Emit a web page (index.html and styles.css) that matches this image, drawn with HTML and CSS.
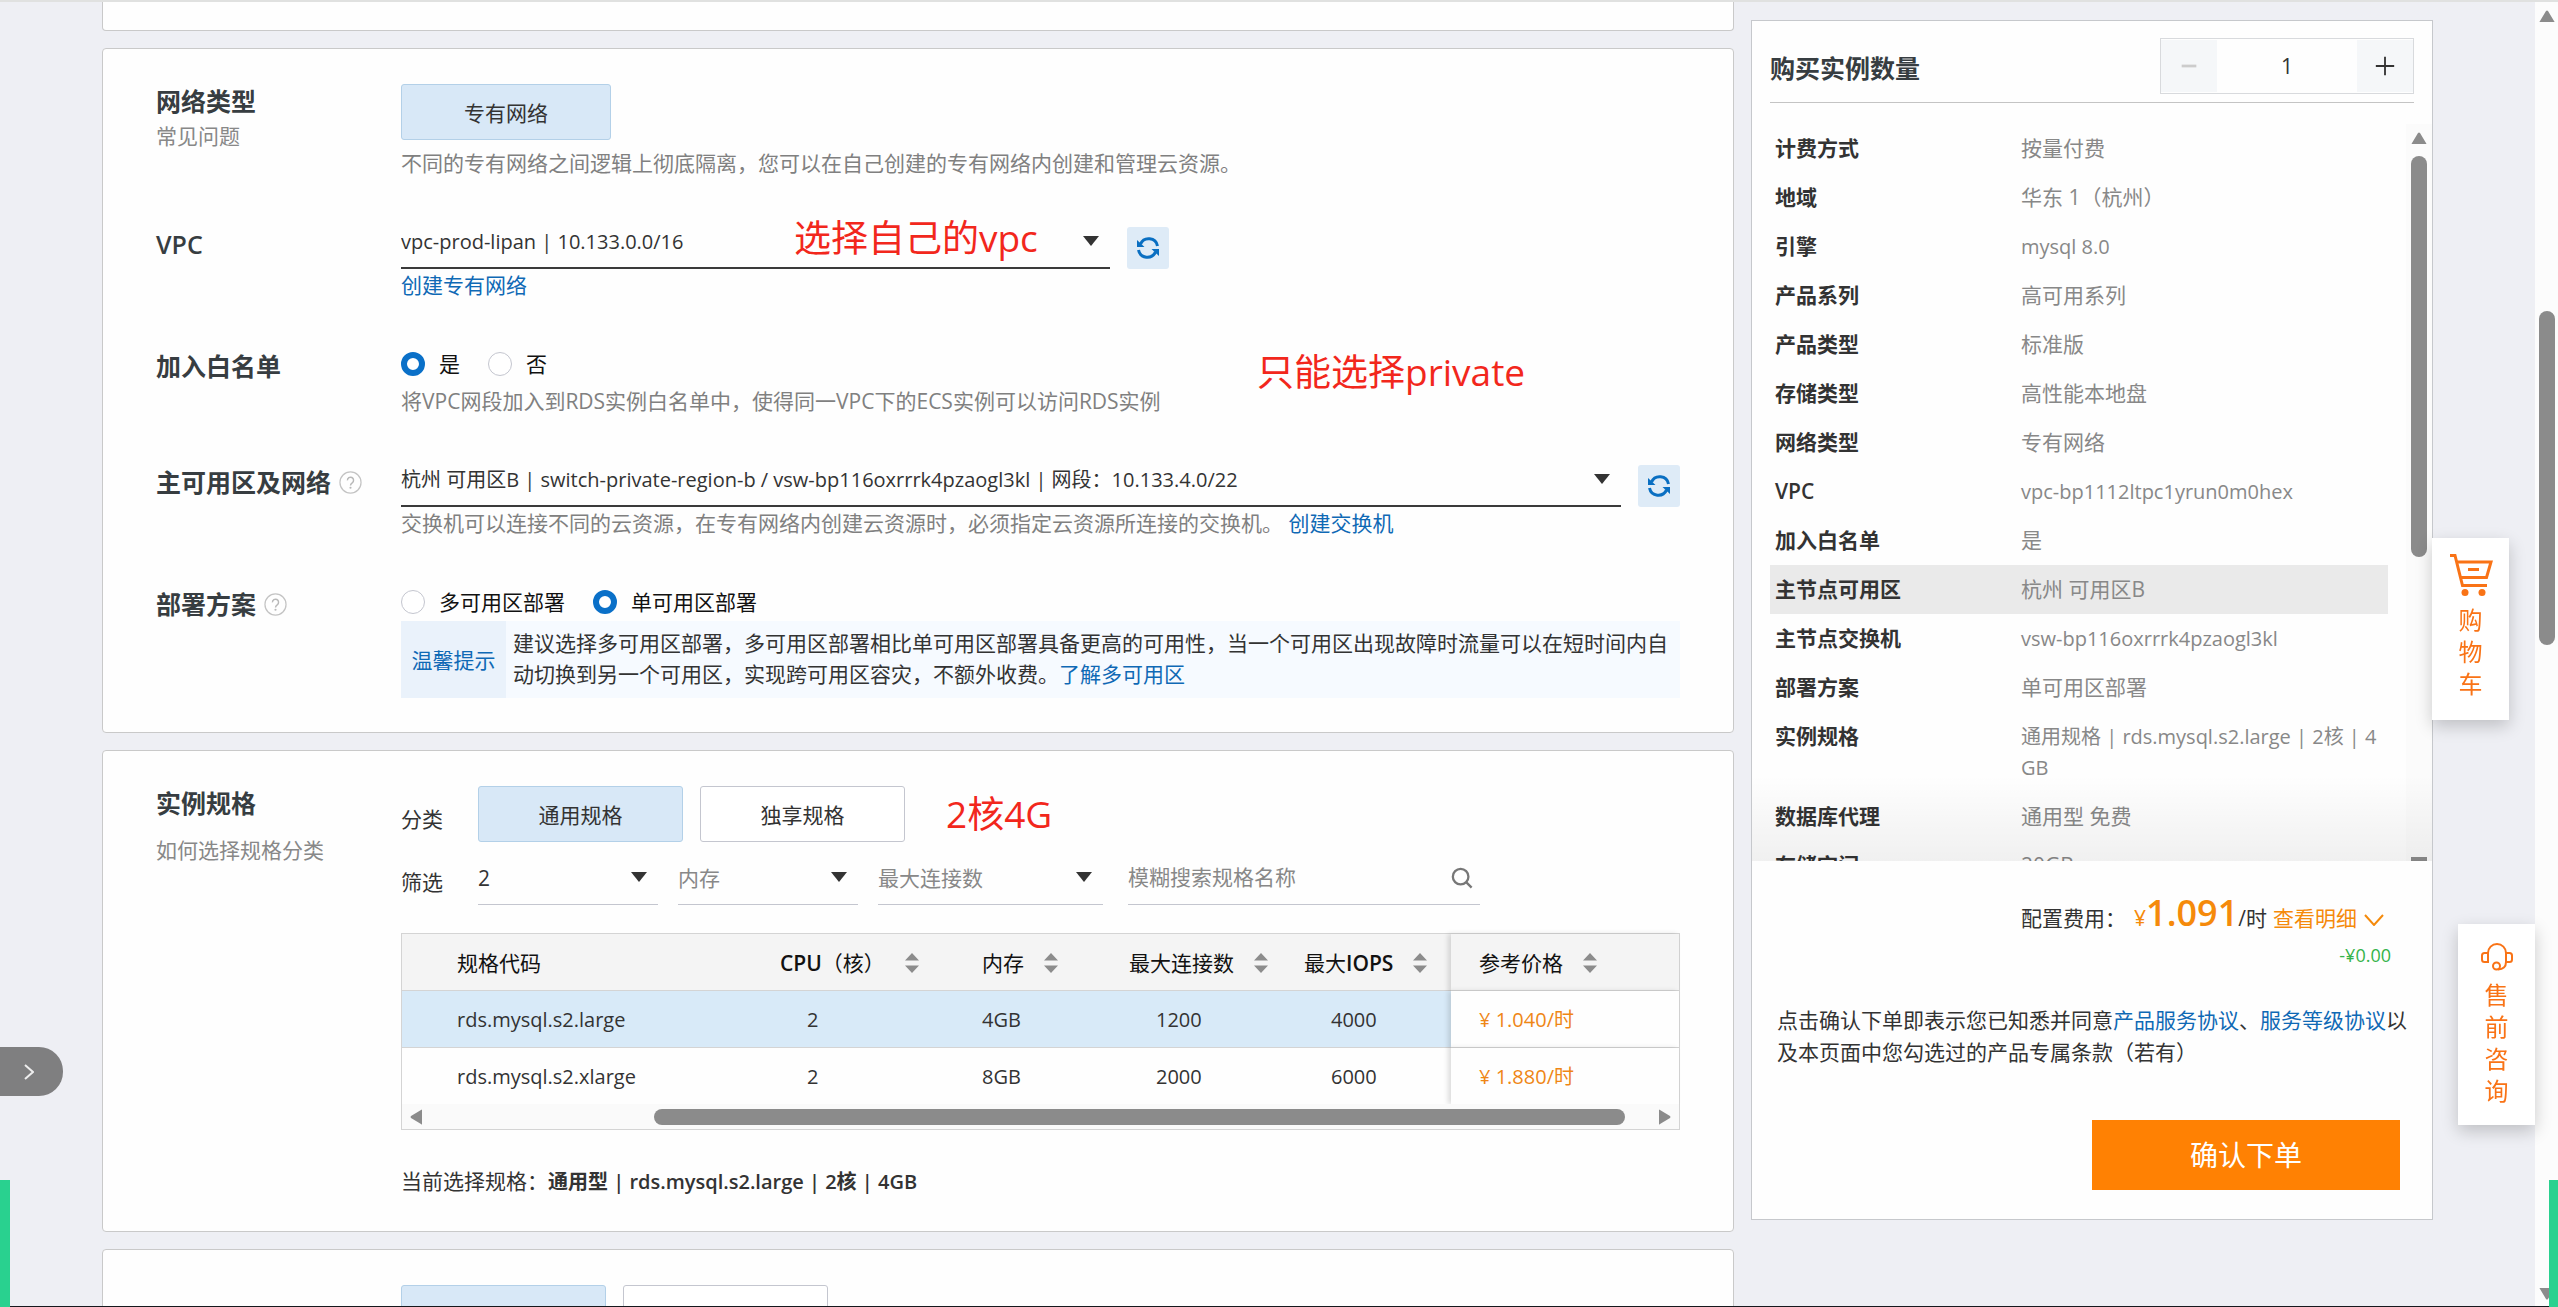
FILE: index.html
```html
<!DOCTYPE html>
<html lang="zh-CN">
<head>
<meta charset="utf-8">
<title>购买 RDS 实例</title>
<link rel="stylesheet" href="styles.css">
</head>
<body>
<svg class="defs" aria-hidden="true">
  <symbol id="i-caret" viewBox="0 0 16 10"><path d="M0 0h16L8 10z" fill="#333"/></symbol>
  <symbol id="i-refresh" viewBox="0 0 24 24"><g fill="none" stroke="#0a6fc2" stroke-width="3"><path d="M4.500 8A9 9 0 0 1 21.500 10"/><path d="M19.500 16A9 9 0 0 1 2.500 14"/></g><path d="M1 4v7h7.500zM23 20v-7h-7.500z" fill="#0a6fc2"/></symbol>
  <symbol id="i-help" viewBox="0 0 24 24"><circle cx="12" cy="12" r="11" fill="none" stroke="#c4c4c4" stroke-width="1.300"/><path d="M8.800 9.800a3.200 3.200 0 1 1 5 2.500c-1.200.800-1.800 1.300-1.800 2.700" fill="none" stroke="#b8b8b8" stroke-width="1.500"/><circle cx="12" cy="17.500" r="1.100" fill="#b8b8b8"/></symbol>
  <symbol id="i-sort" viewBox="0 0 14 20"><path d="M7 0l7 7.500H0zM7 20l7-7.500H0z" fill="#8c8c8c"/></symbol>
  <symbol id="i-search" viewBox="0 0 24 24"><g fill="none" stroke="#777" stroke-width="2.500"><circle cx="10.500" cy="10.500" r="8.500"/><path d="M16.500 16.500l6 6"/></g></symbol>
</svg>

<div class="page">
  <main class="form">
    <section class="card card-prev"></section>

    <section class="card">
      <div class="row">
        <div class="side-label"><h2>网络类型</h2><a class="sub" href="#">常见问题</a></div>
        <div class="field">
          <button class="choice choice-on choice-wide" type="button">专有网络</button>
          <p class="hint hint-after-button">不同的专有网络之间逻辑上彻底隔离，您可以在自己创建的专有网络内创建和管理云资源。</p>
        </div>
      </div>

      <div class="row">
        <div class="side-label"><h2><label for="vpc">VPC</label></h2></div>
        <div class="field">
          <div class="picker">
            <div class="select select-vpc">
              <select id="vpc"><option>vpc-prod-lipan | 10.133.0.0/16</option></select>
              <svg><use href="#i-caret"/></svg>
            </div>
            <button class="refresh" type="button" aria-label="刷新"><svg><use href="#i-refresh"/></svg></button>
          </div>
          <p class="hint"><a href="#">创建专有网络</a></p>
          <span class="note note-vpc">选择自己的vpc</span>
        </div>
      </div>

      <div class="row">
        <div class="side-label"><h2>加入白名单</h2></div>
        <div class="field">
          <div class="radios">
            <label><input type="radio" name="white" checked>是</label>
            <label><input type="radio" name="white">否</label>
          </div>
          <p class="hint hint-after-radio">将VPC网段加入到RDS实例白名单中，使得同一VPC下的ECS实例可以访问RDS实例</p>
          <span class="note note-private">只能选择private</span>
        </div>
      </div>

      <div class="row">
        <div class="side-label"><h2><label for="zone">主可用区及网络</label><svg><use href="#i-help"/></svg></h2></div>
        <div class="field">
          <div class="picker">
            <div class="select select-fill">
              <select id="zone"><option>杭州 可用区B | switch-private-region-b / vsw-bp116oxrrrk4pzaogl3kl | 网段：10.133.4.0/22</option></select>
              <svg><use href="#i-caret"/></svg>
            </div>
            <button class="refresh" type="button" aria-label="刷新"><svg><use href="#i-refresh"/></svg></button>
          </div>
          <p class="hint">交换机可以连接不同的云资源，在专有网络内创建云资源时，必须指定云资源所连接的交换机。 <a href="#">创建交换机</a></p>
        </div>
      </div>

      <div class="row">
        <div class="side-label"><h2>部署方案<svg><use href="#i-help"/></svg></h2></div>
        <div class="field">
          <div class="radios">
            <label><input type="radio" name="deploy">多可用区部署</label>
            <label><input type="radio" name="deploy" checked>单可用区部署</label>
          </div>
          <div class="tip">
            <div class="tip-name">温馨提示</div>
            <p>建议选择多可用区部署，多可用区部署相比单可用区部署具备更高的可用性，当一个可用区出现故障时流量可以在短时间内自动切换到另一个可用区，实现跨可用区容灾，不额外收费。<a href="#">了解多可用区</a></p>
          </div>
        </div>
      </div>
    </section>

    <section class="card">
      <div class="row">
        <div class="side-label side-label-loose"><h2>实例规格</h2><a class="sub" href="#">如何选择规格分类</a></div>
        <div class="field">
          <div class="line">
            <span class="line-name line-name-low">分类</span>
            <button class="choice choice-on" type="button">通用规格</button>
            <button class="choice" type="button">独享规格</button>
            <span class="note-inline">2核4G</span>
          </div>
          <div class="line filters">
            <span class="line-name">筛选</span>
            <div class="select select-light"><select aria-label="CPU"><option>2</option></select><svg><use href="#i-caret"/></svg></div>
            <div class="select select-light select-empty"><select aria-label="内存"><option>内存</option></select><svg><use href="#i-caret"/></svg></div>
            <div class="select select-light select-empty select-conn"><select aria-label="最大连接数"><option>最大连接数</option></select><svg><use href="#i-caret"/></svg></div>
            <div class="search"><input type="text" aria-label="规格名称" placeholder="模糊搜索规格名称"><svg><use href="#i-search"/></svg></div>
          </div>

          <div class="table-box">
            <table>
              <colgroup><col class="c-code"><col class="c-cpu"><col class="c-mem"><col class="c-num"><col class="c-num"><col></colgroup>
              <thead>
                <tr>
                  <th class="code">规格代码</th>
                  <th><b>CPU</b>（核）<svg><use href="#i-sort"/></svg></th>
                  <th>内存<svg><use href="#i-sort"/></svg></th>
                  <th>最大连接数<svg><use href="#i-sort"/></svg></th>
                  <th>最大<b>IOPS</b><svg><use href="#i-sort"/></svg></th>
                  <th class="price">参考价格<svg><use href="#i-sort"/></svg></th>
                </tr>
              </thead>
              <tbody>
                <tr class="on"><td class="code">rds.mysql.s2.large</td><td class="num">2</td><td>4GB</td><td class="num">1200</td><td class="num">4000</td><td class="price">¥ 1.040/时</td></tr>
                <tr><td class="code">rds.mysql.s2.xlarge</td><td class="num">2</td><td>8GB</td><td class="num">2000</td><td class="num">6000</td><td class="price">¥ 1.880/时</td></tr>
              </tbody>
            </table>
            <div class="hbar" aria-hidden="true">
              <svg viewBox="0 0 12 16"><path d="M12 1v14q0 1-1 0L1 9q-1-1 0-2l10-6q1-1 1 0z"/></svg>
              <span class="hbar-thumb"></span>
              <svg viewBox="0 0 12 16"><path d="M0 1v14q0 1 1 0l10-6q1-1 0-2L1 1q-1-1-1 0z"/></svg>
            </div>
          </div>

          <p class="picked">当前选择规格：<strong>通用型 | rds.mysql.s2.large | 2核 | 4GB</strong></p>
        </div>
      </div>
    </section>

    <section class="card">
      <div class="row">
        <div class="side-label"></div>
        <div class="field line">
          <button class="choice choice-on" type="button" aria-label="选项一"></button>
          <button class="choice" type="button" aria-label="选项二"></button>
        </div>
      </div>
    </section>
  </main>

  <aside class="order">
    <header class="order-head">
      <h2><label for="qty">购买实例数量</label></h2>
      <div class="stepper">
        <button type="button" aria-label="减少"><svg viewBox="0 0 24 24"><path d="M4 12h16" stroke="#ccc" stroke-width="3"/></svg></button>
        <input id="qty" type="text" value="1">
        <button type="button" aria-label="增加"><svg viewBox="0 0 24 24"><path d="M2 12h20M12 2v20" stroke="#333" stroke-width="2"/></svg></button>
      </div>
    </header>

    <div class="summary">
      <dl>
        <div><dt>计费方式</dt><dd>按量付费</dd></div>
        <div><dt>地域</dt><dd>华东 1（杭州）</dd></div>
        <div><dt>引擎</dt><dd class="code-text">mysql 8.0</dd></div>
        <div><dt>产品系列</dt><dd>高可用系列</dd></div>
        <div><dt>产品类型</dt><dd>标准版</dd></div>
        <div><dt>存储类型</dt><dd>高性能本地盘</dd></div>
        <div><dt>网络类型</dt><dd>专有网络</dd></div>
        <div><dt>VPC</dt><dd class="code-text">vpc-bp1112ltpc1yrun0m0hex</dd></div>
        <div><dt>加入白名单</dt><dd>是</dd></div>
        <div class="hover"><dt>主节点可用区</dt><dd>杭州 可用区B</dd></div>
        <div><dt>主节点交换机</dt><dd class="code-text">vsw-bp116oxrrrk4pzaogl3kl</dd></div>
        <div><dt>部署方案</dt><dd>单可用区部署</dd></div>
        <div><dt>实例规格</dt><dd class="code-text">通用规格 | rds.mysql.s2.large | 2核 | 4<wbr>GB</dd></div>
        <div><dt>数据库代理</dt><dd>通用型 免费</dd></div>
        <div><dt>存储空间</dt><dd>20GB</dd></div>
      </dl>
      <div class="vbar" aria-hidden="true">
        <svg viewBox="0 0 16 12"><path d="M1 12h14q1 0 0-1L9 1q-1-1-2 0L1 11q-1 1 0 1z"/></svg>
        <span class="vbar-thumb"></span>
        <span class="vbar-end"></span>
      </div>
    </div>

    <div class="fee">
      <span>配置费用：</span>
      <span class="fee-sum"><span class="orange">¥</span><strong>1.091</strong>/时</span>
      <a class="orange" href="#">查看明细<svg viewBox="0 0 20 12"><path d="M1 1l9 10L19 1" fill="none" stroke="#f58a0b" stroke-width="2"/></svg></a>
    </div>
    <p class="discount">-¥0.00</p>
    <p class="terms">点击确认下单即表示您已知悉并同意<a href="#">产品服务协议</a>、<a href="#">服务等级协议</a>以及本页面中您勾选过的产品专属条款（若有）</p>
    <button class="submit" type="button">确认下单</button>
  </aside>
</div>

<div class="page-bar" aria-hidden="true">
  <svg viewBox="0 0 16 12"><path d="M1 12h14q1 0 0-1L9 1q-1-1-2 0L1 11q-1 1 0 1z"/></svg>
  <span class="page-thumb"></span>
  <svg viewBox="0 0 16 12"><path d="M1 0h14q1 0 0 1L9 11q-1 1-2 0L1 1q-1-1 0-1z"/></svg>
</div>

<button class="drawer" type="button" aria-label="展开"><svg viewBox="0 0 10 16"><path d="M1 1l8 7-8 7" fill="none" stroke="#eee" stroke-width="2"/></svg></button>

<a class="float cart" href="#">
  <svg viewBox="0 0 44 44"><g fill="none" stroke="#f97316" stroke-width="3"><path d="M1 2.500h5L13.500 32.500H38"/><path d="M8 9h34l-4.500 15.500H12"/><path d="M19 16.500h11"/></g><circle cx="16" cy="39.500" r="3.500" fill="#f97316"/><circle cx="33" cy="39.500" r="3.500" fill="#f97316"/></svg>
  <span>购物车</span>
</a>
<a class="float consult" href="#">
  <svg viewBox="0 0 32 28"><g fill="none" stroke="#f97316" stroke-width="2"><path d="M7 19V10a9 9 0 0 1 18 0v9q0 7-8 7.500"/><path d="M7 10H3.500Q1 10 1 12.500v4Q1 19 3.500 19H7zM25 10h3.500q2.500 0 2.500 2.500v4q0 2.500-2.500 2.500H25z"/><circle cx="15.500" cy="23" r="3.500"/></g></svg>
  <span>售前咨询</span>
</a>
<span class="edge edge-left"></span>
<span class="edge edge-right"></span>
</body>
</html>
```
FILE: styles.css
```css
* { box-sizing: border-box; }

body {
  display: flex;
  height: 100vh;
  margin: 0;
  overflow: hidden;
  border-top: 2px solid #e0e1e0;
  border-bottom: 1px solid #15181d;
  background: #eeeff4;
  color: #333;
  font: 21px/30px "Open Sans", "Noto Sans CJK SC", sans-serif;
}

h2, p, dl, dd { margin: 0; }
a { color: #0f69b5; text-decoration: none; }
button, input, select { margin: 0; border: 0; border-radius: 0; padding: 0; background: none; color: inherit; font: inherit; }
svg { display: block; flex: none; }
.defs { position: absolute; width: 0; height: 0; }

.page {
  display: flex;
  flex: 1;
  align-items: flex-start;
  gap: 17px;
  min-width: 0;
  padding: 0 102px;
  overflow: hidden;
}

/* form column */
.form { display: flex; flex: 1; flex-direction: column; gap: 17px; min-width: 0; }
.card {
  display: flex;
  flex-direction: column;
  gap: 49px;
  padding: 35px 53px 34px 53px;
  border: 1px solid #c9c9c9;
  border-radius: 4px;
  background: #fefefe;
}
.card-prev { height: 29px; padding: 0; border-top: 0; border-radius: 0 0 4px 4px; }
.row { display: grid; grid-template-columns: 245px minmax(0, 1fr); }
.field { position: relative; }

.side-label { display: flex; flex-direction: column; gap: 3px; }
.side-label-loose { gap: 15px; }
.side-label h2 { display: flex; align-items: center; gap: 8px; font-size: 25px; line-height: 34px; font-weight: 600; color: #373d41; }
.side-label h2 svg { width: 23px; height: 23px; }
.sub { color: #888; }
.hint { margin-top: 1px; color: #808080; }
.hint-after-button { margin-top: 8px; }
.hint-after-radio { margin-top: 7px; }

.choice {
  width: 205px;
  height: 56px;
  padding-top: 2px;
  border: 1px solid #c4c6cf;
  border-radius: 3px;
  background: #fff;
}
.choice-on { border-color: #b3d0e8; background: #d8e8f7; }
.choice-wide { width: 210px; }

.picker { display: flex; gap: 17px; }
.select { display: grid; align-items: start; height: 42px; border-bottom: 2px solid #3a3a3a; }
.select > * { grid-area: 1 / 1; }
.select select { width: 100%; height: 28px; appearance: none; outline: 0; font-size: 20px; }
.select svg { width: 16px; height: 10px; margin: 9px 11px 0 0; justify-self: end; pointer-events: none; }
.select-vpc { width: 709px; }
.select-fill { flex: 1; }
.refresh { display: grid; place-items: center; width: 42px; height: 42px; border-radius: 3px; background: #deebf7; }
.refresh svg { width: 24px; height: 24px; }

.radios { display: flex; gap: 28px; color: #111; }
.radios label { display: flex; align-items: center; gap: 14px; }
.radios input { width: 24px; height: 24px; appearance: none; border: 1px solid #c4c6cf; border-radius: 50%; background: #fff; }
.radios input:checked { border: 6px solid #0a70c8; }

.tip { display: flex; margin-top: 4px; background: #f6faff; }
.tip-name { display: grid; flex: none; place-items: center; width: 105px; background: #eaf2fb; color: #0f69b5; }
.tip p { padding: 7px 0 8px 7px; line-height: 31px; }

/* red remarks written over the form */
.note, .note-inline { color: #f2271c; font-size: 37px; line-height: 50px; white-space: nowrap; }
.note { position: absolute; pointer-events: none; }
.note-vpc { top: -14px; left: 393px; }
.note-private { top: -2px; left: 856px; }
.note-inline { margin-left: 24px; }

.line { display: flex; align-items: center; gap: 17px; }
.line-name { width: 60px; }
.line-name-low { padding-top: 10px; }
.filters { gap: 20px; margin-top: 21px; }
.filters .line-name { width: 57px; padding-bottom: 4px; }
.filters select { font-size: 21px; }
.select-light { width: 180px; border-bottom: 1px solid #c4c6cf; }
.select-empty { color: #888; }
.select-conn { width: 225px; }
.search { display: flex; width: 352px; height: 42px; margin-left: 5px; border-bottom: 1px solid #c4c6cf; }
.search input { flex: 1; min-width: 0; height: 28px; outline: 0; }
.search input::placeholder { color: #888; opacity: 1; }
.search svg { width: 22px; height: 22px; margin: 4px 7px 0 0; }

.table-box { margin-top: 28px; border: 1px solid #d4d4d4; }
table { width: 100%; border-collapse: separate; border-spacing: 0; table-layout: fixed; }
.c-code { width: 350px; }
.c-cpu { width: 202px; }
.c-mem { width: 147px; }
.c-num { width: 175px; }
th, td { height: 57px; padding: 1px 0 0 28px; border-bottom: 1px solid #d4d4d4; text-align: left; white-space: nowrap; }
td { font-size: 20px; }
tbody tr:last-child td { height: 56px; border-bottom: 0; }
th { background: #f4f4f4; color: #111; font-weight: 400; }
th b { font-weight: 600; }
th svg { display: inline-block; width: 14px; height: 20px; margin-left: 20px; vertical-align: -2px; }
.code { padding-left: 55px; }
.num { padding-left: 55px; }
.on td { background: #d8eaf8; }
.price { box-shadow: -3px 0 5px #0002; }
td.price, .on td.price { background: #fefefe; color: #ef8615; }
.hbar { display: flex; align-items: center; justify-content: space-between; height: 25px; padding: 0 8px; background: #fafafa; fill: #8b8b8b; }
.hbar svg { width: 12px; height: 16px; }
.hbar-thumb { width: 77%; height: 16px; margin: 0 34px 0 auto; border-radius: 8px; background: #8b8b8b; }
.picked { margin-top: 36px; }
.picked strong { font-size: 20px; font-weight: 600; }

/* order panel */
.order { display: flex; flex: none; flex-direction: column; width: 682px; margin-top: 18px; padding: 17px 0 29px 18px; border: 1px solid #c6c8cc; background: #fefefe; }
.order-head { display: flex; align-items: center; justify-content: space-between; margin-right: 18px; padding-bottom: 8px; border-bottom: 1px solid #c4c4c4; }
.order-head h2 { font-size: 25px; line-height: 36px; font-weight: 600; color: #373d41; padding-top: 4px; }
.stepper { display: flex; width: 254px; height: 56px; border: 1px solid #d8dadd; padding: 1px 0; }
.stepper button { display: grid; place-items: center; width: 56px; background: #f5f7f9; }
.stepper svg { width: 22px; height: 22px; }
.stepper input { flex: 1; min-width: 0; text-align: center; }

.summary { position: relative; display: flex; height: calc(100vh - 570px); margin: 21px 0 0 -18px; padding-left: 18px; overflow: hidden; }
.summary::after { content: ""; position: absolute; inset: auto 0 0 0; height: 86px; background: linear-gradient(#0000, #0000000e); pointer-events: none; }
.summary dl { flex: 1; }
.summary dl div { display: grid; grid-template-columns: 246px minmax(0, 1fr); padding: 9px 0 9px 5px; line-height: 31px; }
.summary .hover { background: #eaeaea; }
.summary dt { font-weight: 600; }
.summary dd { color: #888; }
.code-text { font-size: 20px; }
.vbar { display: flex; flex: none; flex-direction: column; align-items: center; width: 26px; margin-left: 18px; padding-top: 8px; background: #fbfbfb; fill: #8b8b8b; }
.vbar svg { width: 16px; height: 12px; }
.vbar-thumb { width: 16px; height: 55%; margin: 12px 0 auto; border-radius: 8px; background: #8b8b8b; }
.vbar-end { width: 16px; height: 4px; background: #8b8b8b; }

.fee { display: flex; align-items: baseline; justify-content: flex-end; gap: 6px; margin-top: 30px; padding-right: 48px; line-height: 44px; }
.fee-sum { margin-left: 2px; }
.fee strong { color: #f58a0b; font-size: 36px; font-weight: 600; }
.orange { color: #f58a0b; }
.fee svg { display: inline-block; width: 20px; height: 12px; margin-left: 7px; }
.discount { padding-right: 41px; color: #35b34a; font-size: 18px; text-align: right; }
.terms { margin-top: 34px; padding: 0 18px 0 7px; line-height: 32px; }
.submit { align-self: flex-end; width: 308px; height: 70px; margin: 52px 32px 0 0; background: #ff8103; color: #fff; font-size: 28px; }

/* window scroll bar */
.page-bar { display: flex; flex: none; flex-direction: column; align-items: center; justify-content: space-between; width: 23px; padding: 8px 0 6px; background: #fcfcfc; fill: #8b8b8b; }
.page-bar svg { width: 16px; height: 12px; }
.page-thumb { width: 16px; height: 334px; margin: 289px 0 auto; border-radius: 8px; background: #8b8b8b; }

/* things that float over the page */
.drawer { position: fixed; left: 0; bottom: 211px; display: grid; place-items: center; width: 63px; height: 49px; padding-right: 5px; border-radius: 0 24px 24px 0; background: #7f7f80; }
.drawer svg { width: 10px; height: 16px; }
.float { position: fixed; display: flex; flex-direction: column; align-items: center; width: 77px; background: #fff; box-shadow: 0 6px 16px #0003; color: #f97316; font-size: 24px; line-height: 32px; }
.float span { width: 24px; word-break: break-all; }
.cart { top: 538px; right: 49px; gap: 7px; height: 182px; padding-top: 15px; }
.cart svg { width: 44px; height: 44px; }
.consult { top: 924px; right: 23px; gap: 8px; height: 201px; padding-top: 19px; }
.consult svg { width: 32px; height: 28px; }
.edge { position: fixed; bottom: 0; height: 127px; background: #29d18f; }
.edge-left { left: 0; width: 10px; }
.edge-right { right: 0; width: 9px; }
```
